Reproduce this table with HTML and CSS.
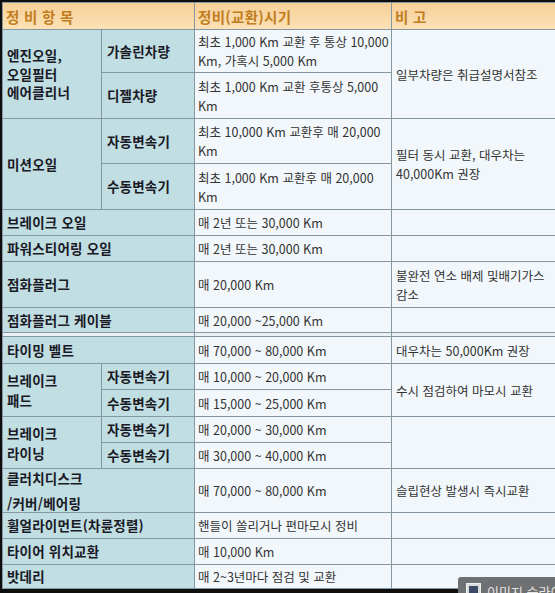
FILE: index.html
```html
<!DOCTYPE html>
<html lang="ko">
<head>
<meta charset="utf-8">
<title>정비 항목</title>
<link rel="stylesheet" href="styles.css">
</head>
<body>
<div class="sheet">
  <div class="hd cs2">정 비 항 목</div>
  <div class="hd">정비(교환)시기</div>
  <div class="hd">비 고</div>

  <div class="cat rs2 l3">엔진오일,<br>오일필터<br>에어클리너</div>
  <div class="cat sub">가솔린차량</div>
  <div class="val">최초 1,000 Km 교환 후 통상 10,000<br>Km, 가혹시 5,000 Km</div>
  <div class="val note rs2">일부차량은 취급설명서참조</div>
  <div class="cat sub">디젤차량</div>
  <div class="val">최초 1,000 Km 교환 후통상 5,000<br>Km</div>

  <div class="cat rs2">미션오일</div>
  <div class="cat sub">자동변속기</div>
  <div class="val">최초 10,000 Km 교환후 매 20,000<br>Km</div>
  <div class="val note rs2">필터 동시 교환, 대우차는<br>40,000Km 권장</div>
  <div class="cat sub">수동변속기</div>
  <div class="val">최초 1,000 Km 교환후 매 20,000<br>Km</div>

  <div class="cat cs2">브레이크 오일</div>
  <div class="val">매 2년 또는 30,000 Km</div>
  <div class="val note"></div>

  <div class="cat cs2">파워스티어링 오일</div>
  <div class="val">매 2년 또는 30,000 Km</div>
  <div class="val note"></div>

  <div class="cat cs2">점화플러그</div>
  <div class="val">매 20,000 Km</div>
  <div class="val note">불완전 연소 배제 및배기가스<br>감소</div>

  <div class="cat cs2">점화플러그 케이블</div>
  <div class="val">매 20,000 ~25,000 Km</div>
  <div class="val note"></div>

  <div class="gap cs2"></div>
  <div class="gap"></div>
  <div class="gap"></div>

  <div class="cat cs2">타이밍 벨트</div>
  <div class="val">매 70,000 ~ 80,000 Km</div>
  <div class="val note">대우차는 50,000Km 권장</div>

  <div class="cat rs2 l2">브레이크<br>패드</div>
  <div class="cat sub">자동변속기</div>
  <div class="val">매 10,000 ~ 20,000 Km</div>
  <div class="val note rs2">수시 점검하여 마모시 교환</div>
  <div class="cat sub">수동변속기</div>
  <div class="val">매 15,000 ~ 25,000 Km</div>

  <div class="cat rs2 l2">브레이크<br>라이닝</div>
  <div class="cat sub">자동변속기</div>
  <div class="val">매 20,000 ~ 30,000 Km</div>
  <div class="val note rs2"></div>
  <div class="cat sub">수동변속기</div>
  <div class="val">매 30,000 ~ 40,000 Km</div>

  <div class="cat cs2 l25">클러치디스크<br>/커버/베어링</div>
  <div class="val">매 70,000 ~ 80,000 Km</div>
  <div class="val note">슬립현상 발생시 즉시교환</div>

  <div class="cat cs2">휠얼라이먼트(차륜정렬)</div>
  <div class="val">핸들이 쏠리거나 편마모시 정비</div>
  <div class="val note"></div>

  <div class="cat cs2">타이어 위치교환</div>
  <div class="val">매 10,000 Km</div>
  <div class="val note"></div>

  <div class="cat cs2">밧데리</div>
  <div class="val">매 2~3년마다 점검 및 교환</div>
  <div class="val note"></div>
</div>

<div class="badge">
  <svg class="badge-icon" width="15" height="12" viewBox="0 0 15 12">
    <rect x="0.5" y="0.5" width="14" height="11" fill="#d8dadc" stroke="#f0f0f0"/>
    <rect x="3" y="3" width="9" height="9" fill="#3d4a66"/>
  </svg>
  <span class="badge-text">이미지 슬라이드</span>
</div>
</body>
</html>
```

FILE: styles.css
```css
html, body {
  margin: 0;
  padding: 0;
  height: 100%;
  overflow: hidden;
  background: #0e0e0e;
}

body {
  position: relative;
  font-family: "Noto Sans CJK KR", "Noto Sans", sans-serif;
  font-size: 12px;
}

.sheet {
  margin: 2px 0 0 2px;
  width: 570px;
  display: grid;
  grid-template-columns: 98px 92px 196px 180px;
  grid-template-rows: 26px 42px 45px 44px 45px 25px 25px 45px 24px 3px 26px 25px 26px 25px 25px 43px 25px 25px 23px;
  gap: 1px;
  padding: 1px;
  background: #8597a2;
}

.sheet > div {
  display: flex;
  align-items: center;
  line-height: 19px;
  white-space: nowrap;
}

.cs2 { grid-column: span 2; }
.rs2 { grid-row: span 2; }

.hd {
  background: linear-gradient(#f6cf98, #fce2b6);
  color: #c27d1f;
  font-weight: bold;
  font-size: 14.5px;
  letter-spacing: 0.3px;
  padding-left: 3px;
}

.cat {
  background: #c1dee3;
  color: #1a1a26;
  font-weight: bold;
  font-size: 13.5px;
  letter-spacing: 0.2px;
  padding-left: 4px;
}

.cat.sub {
  padding-left: 5px;
}

.l3 { line-height: 18.5px !important; }
.l2 { line-height: 20px !important; }
.l25 { line-height: 25px !important; }

.val {
  background: #f2f7fb;
  color: #333;
  font-size: 12.5px;
  padding-left: 3px;
}

.val.note {
  padding-left: 4px;
}

.gap {
  background: #e9f1f4;
}

.badge {
  position: absolute;
  left: 458px;
  top: 577px;
  width: 110px;
  height: 24px;
  background: #6e7072;
  border-top-left-radius: 3px;
  display: flex;
  align-items: flex-start;
  gap: 6px;
  padding: 6px 0 0 8px;
  box-sizing: border-box;
}

.badge-icon {
  flex: none;
}

.badge-text {
  color: #e6e6e6;
  font-size: 13px;
  line-height: 13px;
  margin-top: 2px;
  white-space: nowrap;
}
```
